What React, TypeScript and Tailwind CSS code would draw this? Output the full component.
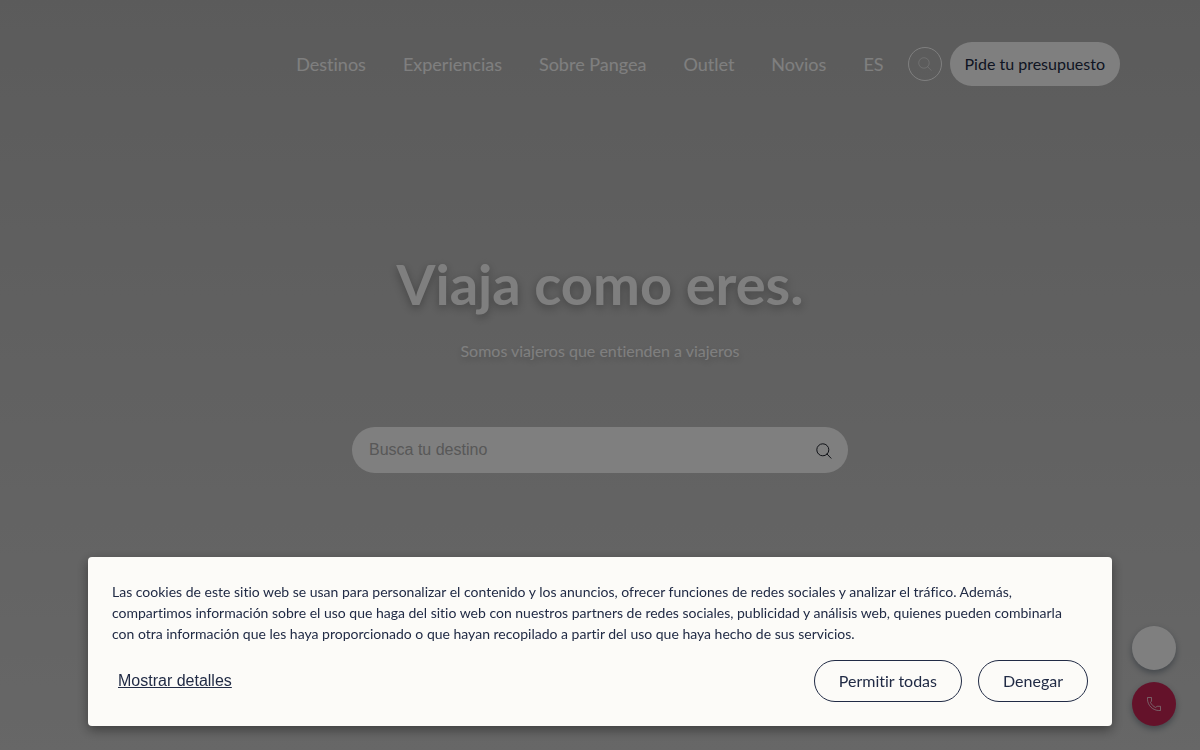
import { useState } from "react";

const navLinks = [
  { href: "#destinos", label: "Destinos" },
  { href: "#experiencias", label: "Experiencias" },
  { href: "#sobre-pangea", label: "Sobre Pangea" },
  { href: "#outlet", label: "Outlet" },
  { href: "#novios", label: "Novios" },
  { href: "#es", label: "ES" },
];

function SearchIcon({ className }: { className: string }) {
  return (
    <svg viewBox="0 0 16 16" fill="none" stroke="currentColor" className={className} aria-hidden="true">
      <circle cx="6.8" cy="6.8" r="6" />
      <path d="M11 11 15 15.2" strokeLinecap="round" />
    </svg>
  );
}

function PhoneIcon() {
  return (
    <svg viewBox="0 0 16 16" fill="none" stroke="currentColor" className="size-4" aria-hidden="true">
      <path
        d="M1.5 1.5h4v3.6L4.5 6.5c.9 2.1 2.9 4 5.1 5l1.5-1.2h3.4v4.2h-2.2C6.4 14 1.9 9.4 1.5 3.7z"
        strokeWidth="0.7"
        strokeLinejoin="round"
      />
    </svg>
  );
}

function Header() {
  return (
    <header className="flex items-center justify-end px-6 pt-[42px] md:px-20">
      <nav className="mr-6 hidden gap-[37px] text-lg leading-6 text-white md:flex">
        {navLinks.map((link) => (
          <a key={link.href} href={link.href} className="hover:underline">
            {link.label}
          </a>
        ))}
      </nav>
      <button
        type="button"
        aria-label="Buscar"
        className="mr-2 flex size-[34px] items-center justify-center rounded-full border border-white text-white/60"
      >
        <SearchIcon className="size-3.5" />
      </button>
      <a
        href="#presupuesto"
        className="flex h-11 items-center rounded-full bg-white px-[15px] text-base text-[#212b45]"
      >
        Pide tu presupuesto
      </a>
    </header>
  );
}

function Hero() {
  return (
    <section className="flex flex-col items-center px-6 pt-[163px] text-center text-white">
      <h1 className="text-[56px] leading-[70px] font-bold [text-shadow:0_3px_10px_rgba(0,0,0,0.3)]">
        Viaja como eres.
      </h1>
      <p className="mt-5 text-base leading-6 [text-shadow:0_3px_6px_rgba(0,0,0,0.2)]">
        Somos viajeros que entienden a viajeros
      </p>
      <form
        onSubmit={(event) => event.preventDefault()}
        className="mt-16 flex h-[46px] w-full max-w-[496px] items-center rounded-full bg-white pr-4 pl-[17px]"
      >
        <input
          type="search"
          aria-label="Busca tu destino"
          placeholder="Busca tu destino"
          className="min-w-0 flex-1 bg-transparent font-['Liberation_Sans',Arial,sans-serif] text-base text-[#212b45] outline-none placeholder:text-[#b0b0b0]"
        />
        <button type="submit" aria-label="Buscar" className="pt-0.5 text-[#20242e]">
          <SearchIcon className="size-4" />
        </button>
      </form>
    </section>
  );
}

function FloatingActions() {
  return (
    <div className="fixed right-6 bottom-6 flex flex-col gap-3">
      <a
        href="#chat"
        aria-label="Chat"
        className="size-11 rounded-full bg-white shadow-[0_3px_6px_rgba(30,50,70,0.4)]"
      />
      <a
        href="#llamar"
        aria-label="Llamar"
        className="flex size-11 items-center justify-center rounded-full bg-[#c92455] text-white shadow-[0_3px_6px_rgba(30,50,70,0.4)]"
      >
        <PhoneIcon />
      </a>
    </div>
  );
}

function CookieBanner({ onClose }: { onClose: () => void }) {
  const buttonClass =
    "h-[42px] rounded-full border border-[#212b45] px-6 text-base hover:bg-[#212b45] hover:text-white";

  return (
    <div className="fixed inset-0 flex items-end justify-center bg-black/50 px-6 pb-6">
      <div
        role="dialog"
        aria-label="Cookies"
        className="w-full max-w-5xl rounded bg-[#fcfbf8] p-6 text-[#212b45] shadow-[0_4px_12px_rgba(0,0,0,0.4)]"
      >
        <p className="pr-2 text-sm leading-[21px]">
          Las cookies de este sitio web se usan para personalizar el contenido y los anuncios, ofrecer funciones de
          redes sociales y analizar el tráfico. Además, compartimos información sobre el uso que haga del sitio web con
          nuestros partners de redes sociales, publicidad y análisis web, quienes pueden combinarla con otra
          información que les haya proporcionado o que hayan recopilado a partir del uso que haya hecho de sus
          servicios.
        </p>
        <div className="mt-4 flex flex-wrap items-center justify-between gap-4">
          <button
            type="button"
            className="px-1.5 font-['Liberation_Sans',Arial,sans-serif] text-base underline"
          >
            Mostrar detalles
          </button>
          <div className="flex gap-4">
            <button type="button" onClick={onClose} className={buttonClass}>
              Permitir todas
            </button>
            <button type="button" onClick={onClose} className={buttonClass}>
              Denegar
            </button>
          </div>
        </div>
      </div>
    </div>
  );
}

export default function App() {
  const [cookiesOpen, setCookiesOpen] = useState(true);

  return (
    <div className="min-h-screen bg-linear-to-b from-[#b7b7b7] to-[#cecece] font-[Lato,sans-serif] [font-variant-ligatures:none]">
      <Header />
      <main>
        <Hero />
      </main>
      <FloatingActions />
      {cookiesOpen && <CookieBanner onClose={() => setCookiesOpen(false)} />}
    </div>
  );
}
